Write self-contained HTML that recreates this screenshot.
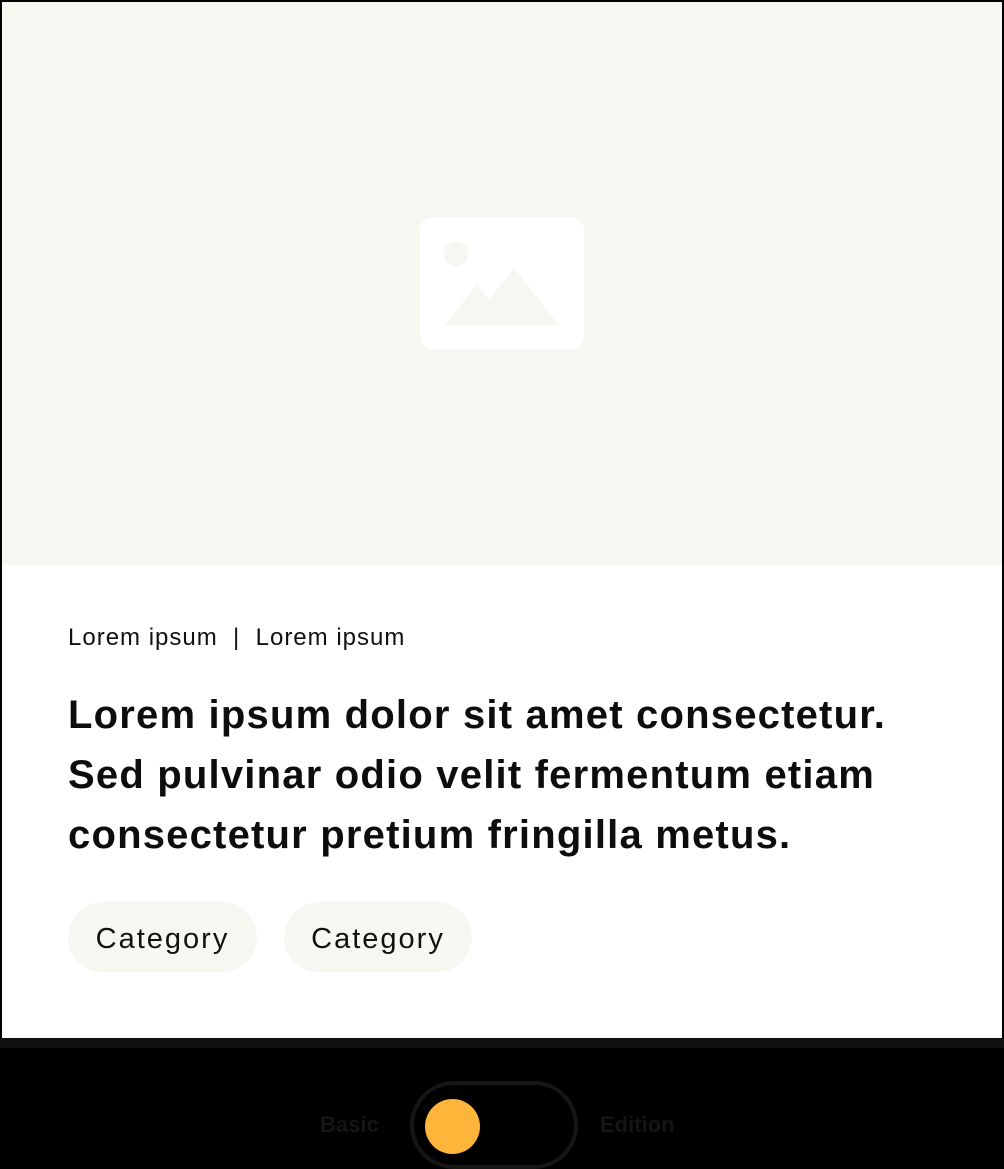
<!DOCTYPE html>
<html><head><style>
body{margin:0;width:1004px;height:1167px;background:#000;overflow:hidden;font-family:"Liberation Sans",sans-serif;}
.card{position:absolute;left:0;top:0;width:1000px;height:1036px;border:2px solid #000;background:#fff;}
.img{position:absolute;left:0;top:0;width:1000px;height:563px;background:#f7f7f2;}
.meta{position:absolute;left:66px;top:622px;font-size:24px;color:#111;letter-spacing:1px;}
h1{position:absolute;left:66px;top:683px;margin:0;font-size:40px;line-height:60px;font-weight:bold;color:#0d0d0d;letter-spacing:1.2px;white-space:nowrap;}
.pill{position:absolute;top:900px;height:70px;border-radius:35px;background:#f7f7f2;font-size:29px;line-height:74px;text-align:center;color:#111;letter-spacing:2px;}
.band{position:absolute;left:0;top:1038px;width:1004px;height:10px;background:#111;}
.tog{position:absolute;left:410px;top:1081px;width:160px;height:80px;border:4px solid #161616;border-radius:44px;}
.knob{position:absolute;left:425px;top:1099px;width:55px;height:55px;border-radius:50%;background:#ffb53a;}
.lbl{position:absolute;top:1112px;font-size:22px;font-weight:bold;color:#151515;}
</style></head><body>
<div class="card">
<div class="img">
<svg width="1000" height="563" style="position:absolute;left:0;top:0">
<rect x="418" y="215" width="164" height="132" rx="13" fill="#fff"/>
<circle cx="454" cy="252" r="12.5" fill="#f7f7f2"/>
<path d="M443 323 L475 282 L487 298 L512 266 L557 323 Z" fill="#f7f7f2"/>
</svg>
</div>
<div class="meta">Lorem ipsum &nbsp;|&nbsp; Lorem ipsum</div>
<h1>Lorem ipsum dolor sit amet consectetur.<br>Sed pulvinar odio velit fermentum etiam<br>consectetur pretium fringilla metus.</h1>
<div class="pill" style="left:66px;width:189px">Category</div>
<div class="pill" style="left:282px;width:188px">Category</div>
</div>
<div class="band"></div>
<div class="lbl" style="left:320px">Basic</div>
<div class="tog"></div>
<div class="knob"></div>
<div class="lbl" style="left:600px">Edition</div>
</body></html>
